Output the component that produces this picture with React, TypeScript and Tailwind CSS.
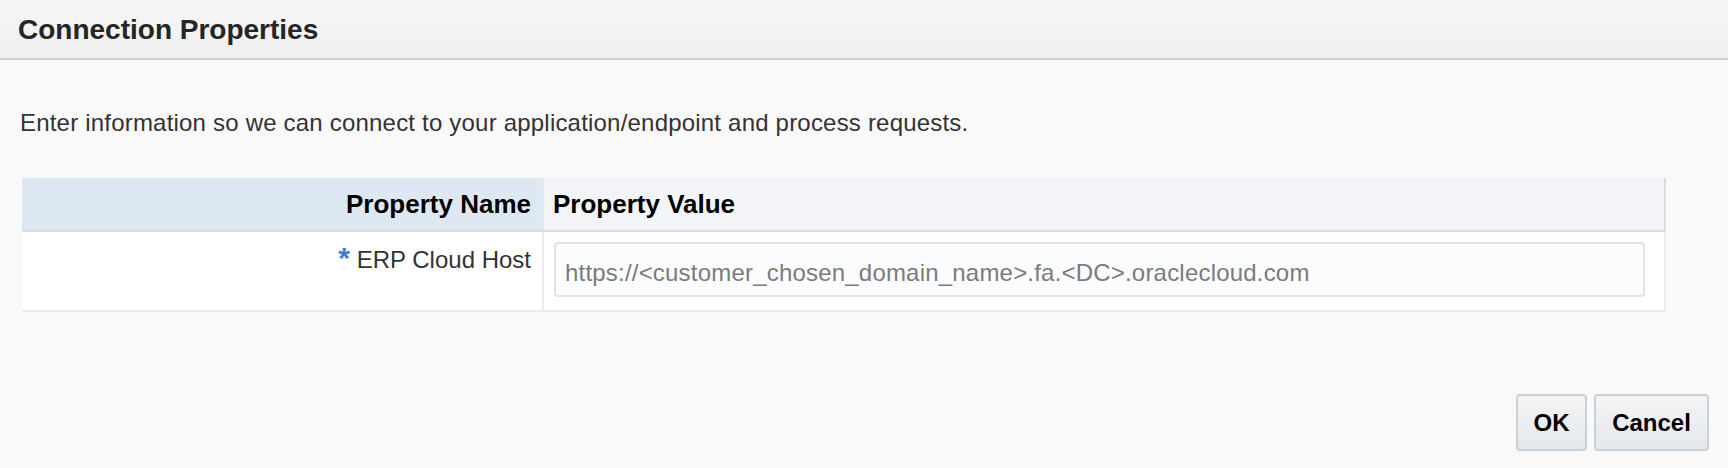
const App = () => {
  return (
    <div className="w-full h-[468px] flex flex-col bg-[#f9f9f9] font-['Liberation_Sans',Arial,sans-serif]">
      {/* Title bar */}
      <div className="h-[60px] border-b-2 border-[#c9d1da] bg-gradient-to-b from-[#f6f6f6] to-[#efefef] pl-[18px] pt-[16px]">
        <h1 className="text-[28px] leading-[28px] font-bold text-[#252525]">Connection Properties</h1>
      </div>

      {/* Body */}
      <div className="px-[20px] pt-[51px]">
        <p className="text-[24px] leading-[24px] tracking-[0.2px] text-[#333]">
          Enter information so we can connect to your application/endpoint and process requests.
        </p>
      </div>

      {/* Property table */}
      <div className="ml-[22px] mt-[43px] w-[1644px]">
        <div className="flex h-[54px] border-b-2 border-[#d7dee5]">
          <div className="w-[522px] border-r-2 border-[#e4e9ef] bg-[#dde8f3] flex items-center justify-end pr-[11px]">
            <span className="text-[26px] leading-[26px] font-bold text-black">Property Name</span>
          </div>
          <div className="flex-1 border-r-2 border-[#d5dde5] bg-[#f2f4f7] flex items-center pl-[9px]">
            <span className="text-[26px] leading-[26px] font-bold text-black">Property Value</span>
          </div>
        </div>
        <div className="flex h-[80px] border-b-2 border-[#ececec] bg-white">
          <div className="w-[522px] border-r-2 border-[#ececec] text-right pr-[11px] pt-[14px]">
            <span className="text-[24px] leading-[24px] text-[#333]">
              <span className="text-[30px] leading-[24px] font-bold text-[#3a7bd5]">*</span> ERP Cloud Host
            </span>
          </div>
          <div className="flex-1 border-r-2 border-[#ececec] pl-[10px] pt-[10px]">
            <input
              readOnly
              defaultValue="https://<customer_chosen_domain_name>.fa.<DC>.oraclecloud.com"
              className="w-[1091px] h-[55px] border-2 border-[#dfe2e6] rounded-[4px] bg-[#fbfcfd] px-[9px] pt-[6px] text-[24px] tracking-[0.2px] text-[#7b7b7b] outline-none"
            />
          </div>
        </div>
      </div>

      {/* Actions */}
      <div className="mt-auto flex justify-end gap-[7px] pr-[19px] pb-[17px]">
        <button className="w-[71px] h-[57px] rounded-[4px] border-2 border-[#c8d0d8] bg-gradient-to-b from-[#f3f4f6] to-[#e5e8eb] text-[24px] font-bold text-black">
          OK
        </button>
        <button className="w-[115px] h-[57px] rounded-[4px] border-2 border-[#c8d0d8] bg-gradient-to-b from-[#f3f4f6] to-[#e5e8eb] text-[24px] font-bold text-black">
          Cancel
        </button>
      </div>
    </div>
  );
};

export default App;
